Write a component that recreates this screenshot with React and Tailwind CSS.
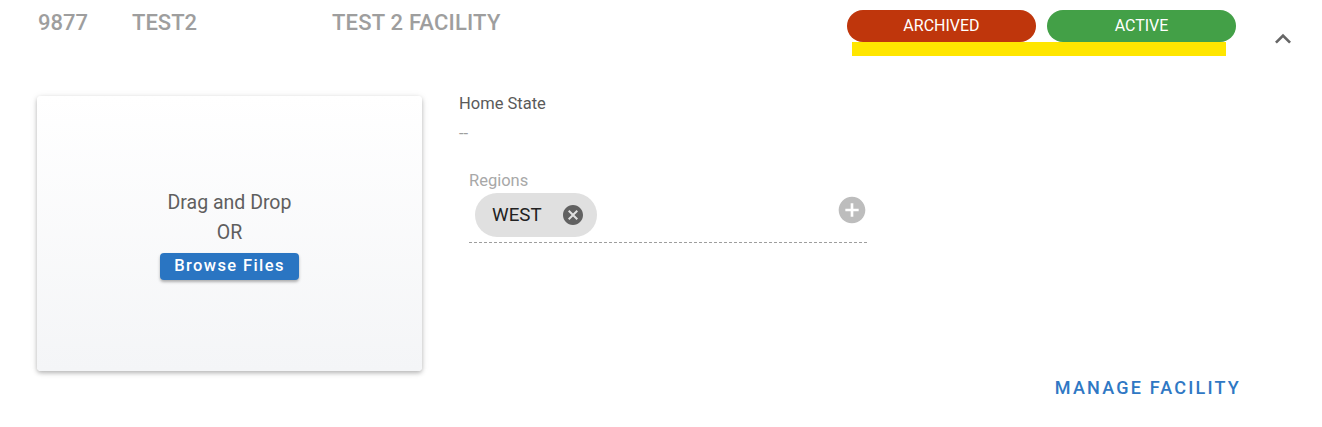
import React from "react";

function CancelIcon({ className }) {
  return (
    <svg viewBox="0 0 24 24" className={className} fill="currentColor">
      <path d="M12 2C6.47 2 2 6.47 2 12s4.47 10 10 10 10-4.47 10-10S17.53 2 12 2zm5 13.59L15.59 17 12 13.41 8.41 17 7 15.59 10.59 12 7 8.41 8.41 7 12 10.59 15.59 7 17 8.41 13.41 12 17 15.59z" />
    </svg>
  );
}

function AddCircleIcon({ className }) {
  return (
    <svg viewBox="0 0 24 24" className={className} fill="currentColor">
      <path d="M12 2C6.48 2 2 6.48 2 12s4.48 10 10 10 10-4.48 10-10S17.52 2 12 2zm5 11h-4v4h-2v-4H7v-2h4V7h2v4h4v2z" />
    </svg>
  );
}

function ExpandLessIcon({ className }) {
  return (
    <svg viewBox="0 0 24 24" className={className} fill="currentColor">
      <path d="M12 8l-6 6 1.41 1.41L12 10.83l4.59 4.58L18 14z" />
    </svg>
  );
}

export default function App() {
  const facility = { id: "9877", code: "TEST2", name: "TEST 2 FACILITY" };
  const regions = ["WEST"];

  return (
    <div className="w-full h-[427px] bg-white font-['Roboto',sans-serif] overflow-hidden">
      {/* summary row */}
      <div className="flex items-start">
        <div className="flex pl-[38px] pt-[10px] text-[22px] leading-[26px] font-medium text-[#9e9e9e]">
          <span className="w-[94px]">{facility.id}</span>
          <span className="w-[200px]">{facility.code}</span>
          <span className="w-[515px] tracking-[0.2px]">{facility.name}</span>
        </div>
        <div className="flex flex-col pt-[10px] w-[389px]">
          <div className="flex gap-[11px] relative z-10">
            <button className="w-[189px] h-[32px] rounded-full bg-[#bf360c] text-white text-[16px] leading-none">
              ARCHIVED
            </button>
            <button className="w-[189px] h-[32px] rounded-full bg-[#43a047] text-white text-[16px] leading-none">
              ACTIVE
            </button>
          </div>
          <div className="ml-[5px] w-[374px] h-[14px] bg-[#ffe600]" />
        </div>
        <ExpandLessIcon className="ml-[31px] mt-[23px] w-[32px] h-[32px] text-[#666]" />
      </div>

      {/* details */}
      <div className="flex items-start pl-[37px] pr-[81px] mt-[40px]">
        <div className="w-[385px] h-[275px] rounded-[4px] bg-gradient-to-b from-white to-[#f4f5f7] shadow-[0_2px_4px_rgba(0,0,0,0.25),0_1px_8px_rgba(0,0,0,0.08)] flex flex-col items-center justify-center">
          <p className="text-[19.5px] leading-[30px] text-[#5f5f5f]">Drag and Drop</p>
          <p className="text-[19.5px] leading-[30px] text-[#5f5f5f]">OR</p>
          <button className="mt-[5px] h-[27px] px-[14px] rounded-[4px] bg-[#2a75c2] text-white text-[16.5px] font-medium tracking-[1.4px] shadow-[0_2px_3px_rgba(0,0,0,0.3)]">
            Browse Files
          </button>
        </div>

        <div className="flex-1 ml-[37px] h-[304px] flex flex-col">
          <p className="text-[16.5px] leading-4 text-[#5a5a5a]">Home State</p>
          <p className="mt-[14px] text-[16.5px] leading-4 text-[#9e9e9e]">--</p>

          <div className="ml-[10px] mt-[31px] w-[399px]">
            <p className="text-[16.5px] leading-4 text-[#a8a8a8]">Regions</p>
            <div className="flex items-start justify-between mt-[4px]">
              <div className="flex gap-2">
                {regions.map((r) => (
                  <div
                    key={r}
                    className="ml-[6px] h-[44px] pl-[17px] pr-[12px] rounded-full bg-[#e0e0e0] flex items-center gap-[19px]"
                  >
                    <span className="text-[18.75px] text-[#222]">{r}</span>
                    <CancelIcon className="w-[24px] h-[24px] text-[#616161]" />
                  </div>
                ))}
              </div>
              <AddCircleIcon className="mt-[1px] w-[32px] h-[32px] text-[#bdbdbd]" />
            </div>
            <div className="mt-[5px] h-px bg-[linear-gradient(to_right,#9e9e9e_60%,transparent_0%)] bg-[length:5px_1px] bg-repeat-x" />
          </div>

          <div className="mt-auto flex justify-end">
            <button className="text-[18px] leading-[24px] font-medium tracking-[2.2px] text-[#2f78c4]">
              MANAGE FACILITY
            </button>
          </div>
        </div>
      </div>
    </div>
  );
}
